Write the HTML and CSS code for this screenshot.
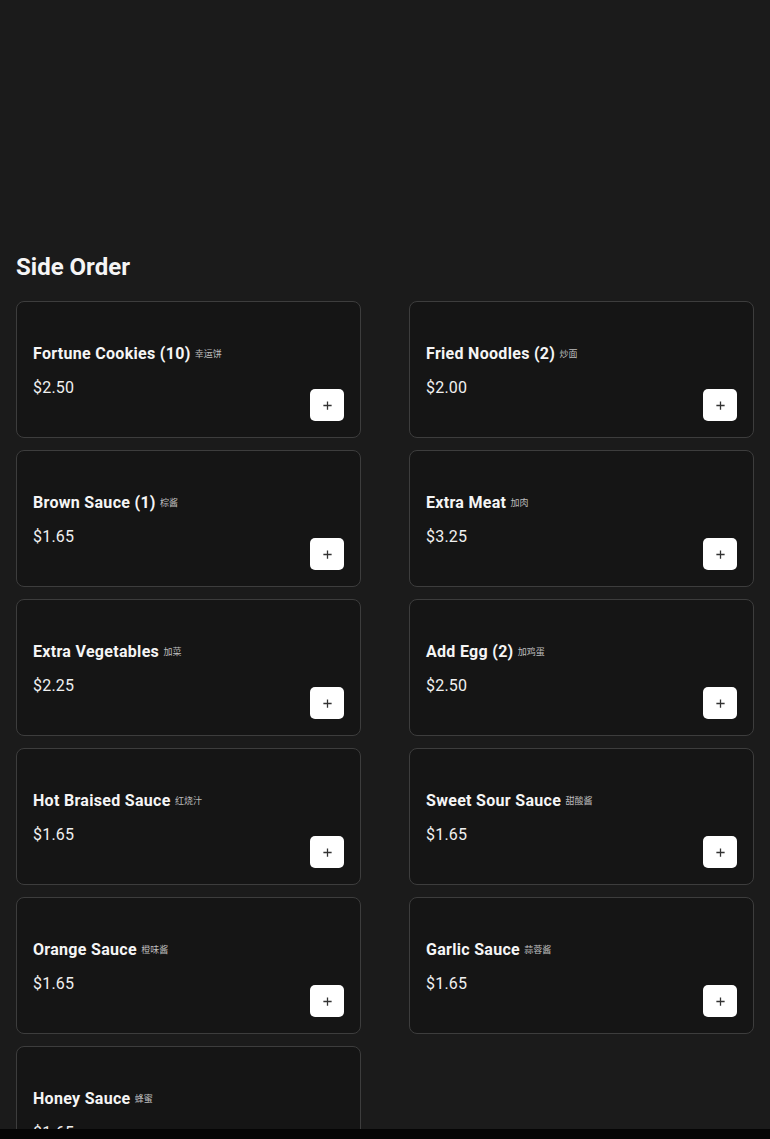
FILE: index.html
```html
<!DOCTYPE html>
<html lang="en">
<head>
  <meta charset="UTF-8" />
  <meta name="viewport" content="width=device-width, initial-scale=1.0"/>
  <title>Side Order</title>
  <link rel="stylesheet" href="styles.css">
</head>
<body>
  <div class="hero"></div>

  <section class="menu-section">
    <h2>Side Order</h2>
    <div class="menu-grid">
      <div class="item">
        <div class="info"><h3>Fortune Cookies (10) <span class="zh">幸运饼</span></h3><p class="price">$2.50</p></div>
        <button class="add" aria-label="Add"><svg viewBox="0 0 12 12"><path d="M6 1.5v9M1.5 6h9"/></svg></button>
      </div>
      <div class="item">
        <div class="info"><h3>Fried Noodles (2) <span class="zh">炒面</span></h3><p class="price">$2.00</p></div>
        <button class="add" aria-label="Add"><svg viewBox="0 0 12 12"><path d="M6 1.5v9M1.5 6h9"/></svg></button>
      </div>
      <div class="item">
        <div class="info"><h3>Brown Sauce (1) <span class="zh">棕酱</span></h3><p class="price">$1.65</p></div>
        <button class="add" aria-label="Add"><svg viewBox="0 0 12 12"><path d="M6 1.5v9M1.5 6h9"/></svg></button>
      </div>
      <div class="item">
        <div class="info"><h3>Extra Meat <span class="zh">加肉</span></h3><p class="price">$3.25</p></div>
        <button class="add" aria-label="Add"><svg viewBox="0 0 12 12"><path d="M6 1.5v9M1.5 6h9"/></svg></button>
      </div>
      <div class="item">
        <div class="info"><h3>Extra Vegetables <span class="zh">加菜</span></h3><p class="price">$2.25</p></div>
        <button class="add" aria-label="Add"><svg viewBox="0 0 12 12"><path d="M6 1.5v9M1.5 6h9"/></svg></button>
      </div>
      <div class="item">
        <div class="info"><h3>Add Egg (2) <span class="zh">加鸡蛋</span></h3><p class="price">$2.50</p></div>
        <button class="add" aria-label="Add"><svg viewBox="0 0 12 12"><path d="M6 1.5v9M1.5 6h9"/></svg></button>
      </div>
      <div class="item">
        <div class="info"><h3>Hot Braised Sauce <span class="zh">红烧汁</span></h3><p class="price">$1.65</p></div>
        <button class="add" aria-label="Add"><svg viewBox="0 0 12 12"><path d="M6 1.5v9M1.5 6h9"/></svg></button>
      </div>
      <div class="item">
        <div class="info"><h3>Sweet Sour Sauce <span class="zh">甜酸酱</span></h3><p class="price">$1.65</p></div>
        <button class="add" aria-label="Add"><svg viewBox="0 0 12 12"><path d="M6 1.5v9M1.5 6h9"/></svg></button>
      </div>
      <div class="item">
        <div class="info"><h3>Orange Sauce <span class="zh">橙味酱</span></h3><p class="price">$1.65</p></div>
        <button class="add" aria-label="Add"><svg viewBox="0 0 12 12"><path d="M6 1.5v9M1.5 6h9"/></svg></button>
      </div>
      <div class="item">
        <div class="info"><h3>Garlic Sauce <span class="zh">蒜蓉酱</span></h3><p class="price">$1.65</p></div>
        <button class="add" aria-label="Add"><svg viewBox="0 0 12 12"><path d="M6 1.5v9M1.5 6h9"/></svg></button>
      </div>
      <div class="item">
        <div class="info"><h3>Honey Sauce <span class="zh">蜂蜜</span></h3><p class="price">$1.65</p></div>
        <button class="add" aria-label="Add"><svg viewBox="0 0 12 12"><path d="M6 1.5v9M1.5 6h9"/></svg></button>
      </div>
    </div>
  </section>

  <div class="bottom-bar"></div>
</body>
</html>
```

FILE: styles.css
```css
body {
  margin: 0;
  background: #1b1b1b;
  color: #f5f5f5;
  font-family: Roboto, "Noto Sans CJK SC", sans-serif;
}
.hero {
  height: 251px;
}
.menu-section {
  padding: 0 16px 40px;
}
.menu-section h2 {
  margin: 0 0 18px;
  font-size: 24px;
  line-height: 32px;
  font-weight: 700;
  color: #f5f5f5;
}
.menu-grid {
  display: grid;
  grid-template-columns: 1fr 1fr;
  column-gap: 48px;
  row-gap: 12px;
}
.item {
  display: flex;
  justify-content: space-between;
  height: 137px;
  box-sizing: border-box;
  padding: 16px;
  background: #151515;
  border: 1px solid #3d3d3d;
  border-radius: 8px;
}
.info {
  padding-top: 24px;
}
.info h3 {
  margin: 0;
  font-size: 16px;
  line-height: 24px;
  font-weight: 700;
  letter-spacing: 0.3px;
  color: #f5f5f5;
}
.zh {
  font-size: 9px;
  font-weight: 400;
  letter-spacing: 0;
  color: #bdbdbd;
  vertical-align: 2px;
}
.price {
  margin: 10px 0 0;
  font-size: 16px;
  line-height: 24px;
  letter-spacing: 0.2px;
  color: #f0f0f0;
}
.add {
  align-self: flex-end;
  width: 34px;
  height: 32px;
  padding: 0;
  border: none;
  border-radius: 5px;
  background: #ffffff;
  display: flex;
  align-items: center;
  justify-content: center;
  cursor: pointer;
}
.add svg {
  width: 11px;
  height: 11px;
  stroke: #333;
  stroke-width: 1.4;
  fill: none;
}
.bottom-bar {
  position: fixed;
  left: 0;
  right: 0;
  bottom: 0;
  height: 10px;
  background: #050505;
}
```
